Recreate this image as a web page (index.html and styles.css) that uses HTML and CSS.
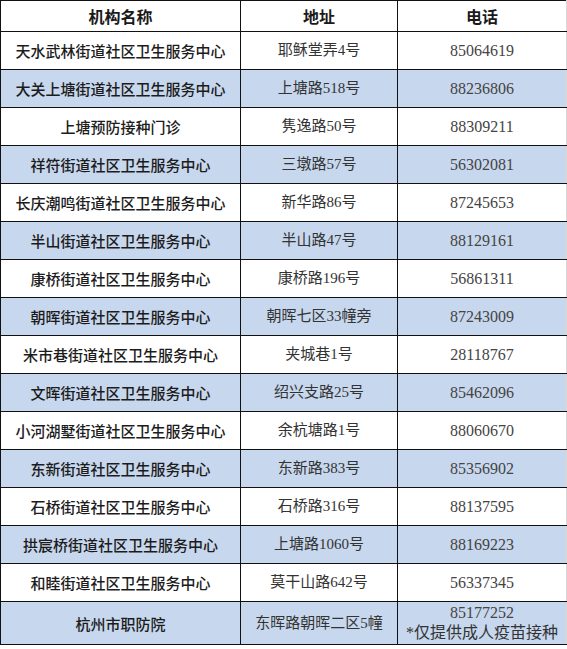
FILE: index.html
```html
<!DOCTYPE html>
<html lang="zh-CN">
<head>
<meta charset="utf-8">
<link rel="stylesheet" href="styles.css">
</head>
<body>
<table class="sites">
  <colgroup>
    <col class="c-name">
    <col class="c-addr">
    <col class="c-tel">
  </colgroup>
  <thead>
    <tr class="head"><th>机构名称</th><th>地址</th><th>电话</th></tr>
  </thead>
  <tbody>
    <tr><td class="name">天水武林街道社区卫生服务中心</td><td class="addr">耶稣堂弄4号</td><td class="tel">85064619</td></tr>
    <tr class="alt"><td class="name">大关上塘街道社区卫生服务中心</td><td class="addr">上塘路518号</td><td class="tel">88236806</td></tr>
    <tr><td class="name">上塘预防接种门诊</td><td class="addr">隽逸路50号</td><td class="tel">88309211</td></tr>
    <tr class="alt"><td class="name">祥符街道社区卫生服务中心</td><td class="addr">三墩路57号</td><td class="tel">56302081</td></tr>
    <tr><td class="name">长庆潮鸣街道社区卫生服务中心</td><td class="addr">新华路86号</td><td class="tel">87245653</td></tr>
    <tr class="alt"><td class="name">半山街道社区卫生服务中心</td><td class="addr">半山路47号</td><td class="tel">88129161</td></tr>
    <tr><td class="name">康桥街道社区卫生服务中心</td><td class="addr">康桥路196号</td><td class="tel">56861311</td></tr>
    <tr class="alt"><td class="name">朝晖街道社区卫生服务中心</td><td class="addr">朝晖七区33幢旁</td><td class="tel">87243009</td></tr>
    <tr><td class="name">米市巷街道社区卫生服务中心</td><td class="addr">夹城巷1号</td><td class="tel">28118767</td></tr>
    <tr class="alt"><td class="name">文晖街道社区卫生服务中心</td><td class="addr">绍兴支路25号</td><td class="tel">85462096</td></tr>
    <tr><td class="name">小河湖墅街道社区卫生服务中心</td><td class="addr">余杭塘路1号</td><td class="tel">88060670</td></tr>
    <tr class="alt"><td class="name">东新街道社区卫生服务中心</td><td class="addr">东新路383号</td><td class="tel">85356902</td></tr>
    <tr><td class="name">石桥街道社区卫生服务中心</td><td class="addr">石桥路316号</td><td class="tel">88137595</td></tr>
    <tr class="alt"><td class="name">拱宸桥街道社区卫生服务中心</td><td class="addr">上塘路1060号</td><td class="tel">88169223</td></tr>
    <tr><td class="name">和睦街道社区卫生服务中心</td><td class="addr">莫干山路642号</td><td class="tel">56337345</td></tr>
    <tr class="alt last"><td class="name">杭州市职防院</td><td class="addr">东晖路朝晖二区5幢</td><td class="tel">85177252<br><span class="note">*仅提供成人疫苗接种</span></td></tr>
  </tbody>
</table>
</body>
</html>
```

FILE: styles.css
```css
html, body {
  margin: 0;
  padding: 0;
  background: #ffffff;
}

.sites {
  border-collapse: collapse;
  table-layout: fixed;
  width: 566px;
  font-family: "Noto Sans CJK SC", "Noto Sans", sans-serif;
  color: #222;
}

.c-name { width: 240px; }
.c-addr { width: 157px; }
.c-tel { width: 169px; }

.sites th,
.sites td {
  border: 1px solid #111;
  padding: 0;
  text-align: center;
  vertical-align: middle;
  white-space: nowrap;
}

.sites th:last-child,
.sites td:last-child {
  border-right-color: #d8d8d8;
}

.head th {
  height: 30px;
  font-size: 16px;
  font-weight: 700;
  color: #1a1a1a;
  line-height: 1;
}

.sites tbody tr td {
  height: 37px;
  line-height: 1;
}

.sites tbody tr.last td {
  height: 42px;
}

.alt td {
  background: #c7d7ed;
}

.name {
  font-size: 15px;
  font-weight: 500;
  color: #1c1c1c;
}

.addr {
  font-size: 15px;
  color: #333;
}

.addr,
.tel {
  font-family: "Liberation Serif", "Noto Sans CJK SC", serif;
}

.tel {
  font-size: 16px;
  color: #444;
}

.last .tel {
  line-height: 20px;
}

.note {
  font-family: "Liberation Serif", "Noto Sans CJK SC", serif;
  font-size: 16px;
  color: #333;
}
```
